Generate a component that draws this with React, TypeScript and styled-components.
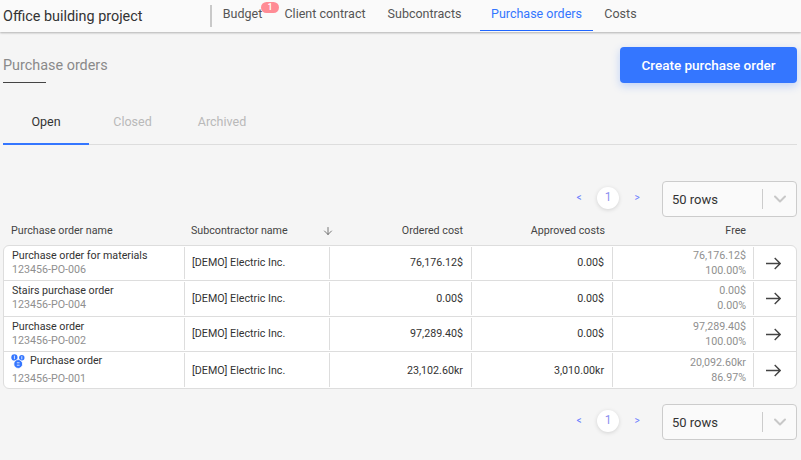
import React from "react";
import styled, { createGlobalStyle } from "styled-components";
import { ArrowDown, ChevronDown } from "lucide-react";

const GlobalStyle = createGlobalStyle`
  html, body {
    margin: 0;
    padding: 0;
    background: #f5f5f5;
    font-family: Roboto, "Liberation Sans", sans-serif;
    color: #333;
    overflow: hidden;
  }
`;

const Page = styled.div`
  width: 801px;
  height: 460px;
  overflow: hidden;
`;

const Header = styled.header`
  display: flex;
  align-items: flex-start;
  height: 32px;
  background: #fafafa;
  box-shadow: 0 1px 2px rgba(0, 0, 0, 0.28);
`;

const ProjectTitle = styled.div`
  width: 207px;
  padding-left: 3px;
  font-size: 14.4px;
  line-height: 33px;
  color: #333;
`;

const HeaderDivider = styled.div`
  width: 2px;
  height: 22px;
  margin-top: 5px;
  background: #c9c9c9;
`;

const Nav = styled.nav`
  display: flex;
  margin-left: 2px;
`;

const NavItem = styled.div<{ $active?: boolean; $width: number }>`
  position: relative;
  box-sizing: border-box;
  width: ${({ $width }) => $width}px;
  height: 31px;
  margin-left: ${({ $active }) => ($active ? "10px" : "0")};
  text-align: center;
  font-size: 12.5px;
  line-height: 27px;
  color: ${({ $active }) => ($active ? "#3476ff" : "#555")};
  border-bottom: ${({ $active }) => ($active ? "1px solid #1f66ff" : "none")};
`;

const Badge = styled.span`
  position: absolute;
  left: 47px;
  top: 2px;
  width: 18px;
  height: 11px;
  border-radius: 6px;
  background: #ff8c95;
  color: #fff;
  font-size: 9px;
  font-weight: 500;
  line-height: 10px;
  text-align: center;
`;

const Content = styled.main`
  padding: 15px 4px 0 3px;
`;

const TitleRow = styled.div`
  display: flex;
  justify-content: space-between;
  align-items: flex-start;
`;

const PageTitle = styled.h1`
  margin: 0;
  padding-top: 10px;
  width: 43px;
  height: 25px;
  white-space: nowrap;
  border-bottom: 1px solid #444;
  font-size: 14.4px;
  font-weight: 400;
  line-height: 18px;
  color: #8a8a8a;
`;

const PrimaryButton = styled.button`
  width: 177px;
  height: 36px;
  border: none;
  border-radius: 4px;
  background: #3476ff;
  box-shadow: 0 3px 8px rgba(52, 118, 255, 0.28);
  color: #fff;
  font-family: inherit;
  font-size: 13.5px;
  font-weight: 500;
`;

const Tabs = styled.div`
  display: flex;
  margin-top: 17px;
  height: 45px;
  border-bottom: 1px solid #ddd;
  box-sizing: border-box;
`;

const Tab = styled.div<{ $active?: boolean; $width: number }>`
  box-sizing: border-box;
  width: ${({ $width }) => $width}px;
  height: 45px;
  text-align: center;
  font-size: 12.5px;
  line-height: 44px;
  color: ${({ $active }) => ($active ? "#333" : "#b9b9b9")};
  border-bottom: ${({ $active }) => ($active ? "2px solid #3476ff" : "none")};
`;

const PagerRow = styled.div<{ $top: number }>`
  display: flex;
  align-items: center;
  justify-content: flex-end;
  height: 36px;
  margin-top: ${({ $top }) => $top}px;
`;

const PagerArrow = styled.span`
  width: 18px;
  margin-bottom: 4px;
  text-align: center;
  font-size: 10px;
  color: #6a7dff;
`;

const PageNumber = styled.span`
  width: 22px;
  height: 22px;
  margin: 0 9px 2px;
  border-radius: 50%;
  background: #fff;
  box-shadow: 0 1px 4px rgba(0, 0, 0, 0.14);
  color: #8b8ff0;
  font-size: 12px;
  line-height: 20px;
  text-align: center;
`;

const RowsSelect = styled.div`
  display: flex;
  align-items: center;
  box-sizing: border-box;
  width: 135px;
  height: 36px;
  margin-left: 16px;
  padding-left: 9px;
  border: 1px solid #ccc;
  border-radius: 4px;
  background: #fafafa;
  font-size: 13px;
  color: #333;
`;

const SelectLabel = styled.span`
  flex: 1;
`;

const SelectDivider = styled.span`
  width: 1px;
  height: 20px;
  background: #ccc;
`;

const SelectIcon = styled.span`
  display: flex;
  justify-content: center;
  width: 33px;
  color: #c8c8c8;
`;

const ColumnGrid = `
  display: grid;
  grid-template-columns: 181px 145px 142px 141px 141px 44px;
`;

const HeadRow = styled.div`
  ${ColumnGrid}
  height: 28px;
  font-size: 10.7px;
  line-height: 26px;
  color: #444;
`;

const HeadCell = styled.div<{ $right?: number }>`
  display: flex;
  align-items: center;
  justify-content: ${({ $right }) => ($right ? "flex-end" : "space-between")};
  padding: 0 ${({ $right }) => $right ?? 0}px 0 8px;
  box-sizing: border-box;
`;

const SortHeadCell = styled(HeadCell)`
  padding-left: 7px;
`;

const SortIcon = styled.span`
  display: flex;
  margin-right: -5px;
  color: #555;
`;

const Table = styled.div`
  box-sizing: border-box;
  border: 1px solid #ddd;
  border-radius: 6px;
  background: #fff;
  overflow: hidden;
`;

const Row = styled.div<{ $height: number }>`
  ${ColumnGrid}
  height: ${({ $height }) => $height}px;
  align-items: stretch;
  border-bottom: 1px solid #ddd;
  box-sizing: border-box;
  &:last-child {
    border-bottom: none;
  }
`;

const Cell = styled.div<{ $last?: boolean; $up?: boolean; $down?: boolean }>`
  display: flex;
  flex-direction: column;
  justify-content: center;
  align-items: flex-end;
  box-sizing: border-box;
  margin: 1px 0 1px;
  padding: ${({ $down }) => ($down ? "1px" : "0")} 8px ${({ $up }) => ($up ? "1px" : "0")} 0;
  border-right: ${({ $last }) => ($last ? "none" : "1px solid #ddd")};
  font-size: 10.7px;
  line-height: 14px;
  color: #333;
`;

const NameCell = styled(Cell)`
  align-items: flex-start;
  padding-left: 8px;
`;

const SubCell = styled(Cell)`
  align-items: flex-start;
  padding-left: 7px;
`;

const FreeCell = styled(Cell)`
  padding-right: 7px;
  line-height: 15px;
  color: #8f8f8f;
`;

const NameLine = styled.div`
  display: flex;
  align-items: center;
  gap: 5px;
  white-space: nowrap;
`;

const OrderNumber = styled.div<{ $gap?: boolean }>`
  margin-top: ${({ $gap }) => ($gap ? "3px" : "0")};
  margin-bottom: ${({ $gap }) => ($gap ? "1px" : "0")};
  color: #8f8f8f;
`;

const ArrowCell = styled(Cell)`
  align-items: center;
  padding: 0 6px 0 0;
  color: #444;
`;

const IconWrap = styled.span`
  display: flex;
  margin-left: -1px;
`;

const MoneyIcon = () => (
  <IconWrap>
    <svg width="14" height="15" viewBox="0 0 14 15">
      <circle cx="3.4" cy="3.4" r="3.1" fill="#3476ff" />
      <circle cx="10.8" cy="3.8" r="2.7" fill="#3476ff" />
      <circle cx="7.2" cy="10" r="4.4" fill="#3476ff" stroke="#fff" strokeWidth="0.8" />
      <path d="M3.4 1.6v3.6M10.8 2.2v3.2M5.8 8.8h2.8M5.8 11.2h2.8" stroke="#fff" strokeWidth="0.8" fill="none" />
    </svg>
  </IconWrap>
);

const RowArrow = () => (
  <svg width="16" height="13" viewBox="0 0 16 13" fill="none" stroke="currentColor" strokeWidth="1.4">
    <path d="M1 6.5H15M9.7 1L15.2 6.5L9.7 12" />
  </svg>
);

const orders = [
  { name: "Purchase order for materials", no: "123456-PO-006", ordered: "76,176.12$", approved: "0.00$", free: "76,176.12$", pct: "100.00%", height: 35 },
  { name: "Stairs purchase order", no: "123456-PO-004", ordered: "0.00$", approved: "0.00$", free: "0.00$", pct: "0.00%", height: 36, raised: true },
  { name: "Purchase order", no: "123456-PO-002", ordered: "97,289.40$", approved: "0.00$", free: "97,289.40$", pct: "100.00%", height: 35 },
  { name: "Purchase order", no: "123456-PO-001", ordered: "23,102.60kr", approved: "3,010.00kr", free: "20,092.60kr", pct: "86.97%", height: 36, icon: true },
];

const Pager = ({ top }: { top: number }) => (
  <PagerRow $top={top}>
    <PagerArrow>&lt;</PagerArrow>
    <PageNumber>1</PageNumber>
    <PagerArrow>&gt;</PagerArrow>
    <RowsSelect>
      <SelectLabel>50 rows</SelectLabel>
      <SelectDivider />
      <SelectIcon>
        <ChevronDown size={20} strokeWidth={2.4} />
      </SelectIcon>
    </RowsSelect>
  </PagerRow>
);

const navItems = [
  { label: "Budget", width: 57, badge: "1" },
  { label: "Client contract", width: 108 },
  { label: "Subcontracts", width: 91 },
  { label: "Purchase orders", width: 113, active: true },
  { label: "Costs", width: 55 },
];

const App = () => {
  return (
    <Page>
      <GlobalStyle />
      <Header>
        <ProjectTitle>Office building project</ProjectTitle>
        <HeaderDivider />
        <Nav>
          {navItems.map((item) => (
            <NavItem key={item.label} $active={item.active} $width={item.width}>
              {item.label}
              {item.badge && <Badge>{item.badge}</Badge>}
            </NavItem>
          ))}
        </Nav>
      </Header>
      <Content>
        <TitleRow>
          <PageTitle>Purchase orders</PageTitle>
          <PrimaryButton>Create purchase order</PrimaryButton>
        </TitleRow>
        <Tabs>
          <Tab $active $width={86}>Open</Tab>
          <Tab $width={87}>Closed</Tab>
          <Tab $width={92}>Archived</Tab>
        </Tabs>
        <Pager top={36} />
        <HeadRow>
          <HeadCell>Purchase order name</HeadCell>
          <SortHeadCell>
            Subcontractor name
            <SortIcon>
              <ArrowDown size={12} strokeWidth={1.6} />
            </SortIcon>
          </SortHeadCell>
          <HeadCell $right={8}>Ordered cost</HeadCell>
          <HeadCell $right={7}>Approved costs</HeadCell>
          <HeadCell $right={7}>Free</HeadCell>
          <HeadCell />
        </HeadRow>
        <Table>
          {orders.map((order) => (
            <Row key={order.no} $height={order.height}>
              <NameCell $up={order.raised}>
                <NameLine>
                  {order.icon && <MoneyIcon />}
                  {order.name}
                </NameLine>
                <OrderNumber $gap={order.icon}>{order.no}</OrderNumber>
              </NameCell>
              <SubCell $down={order.icon}>[DEMO] Electric Inc.</SubCell>
              <Cell $down={order.icon}>{order.ordered}</Cell>
              <Cell $down={order.icon}>{order.approved}</Cell>
              <FreeCell $up={order.raised}>
                <div>{order.free}</div>
                <div>{order.pct}</div>
              </FreeCell>
              <ArrowCell $last>
                <RowArrow />
              </ArrowCell>
            </Row>
          ))}
        </Table>
        <Pager top={15} />
      </Content>
    </Page>
  );
};

export default App;
